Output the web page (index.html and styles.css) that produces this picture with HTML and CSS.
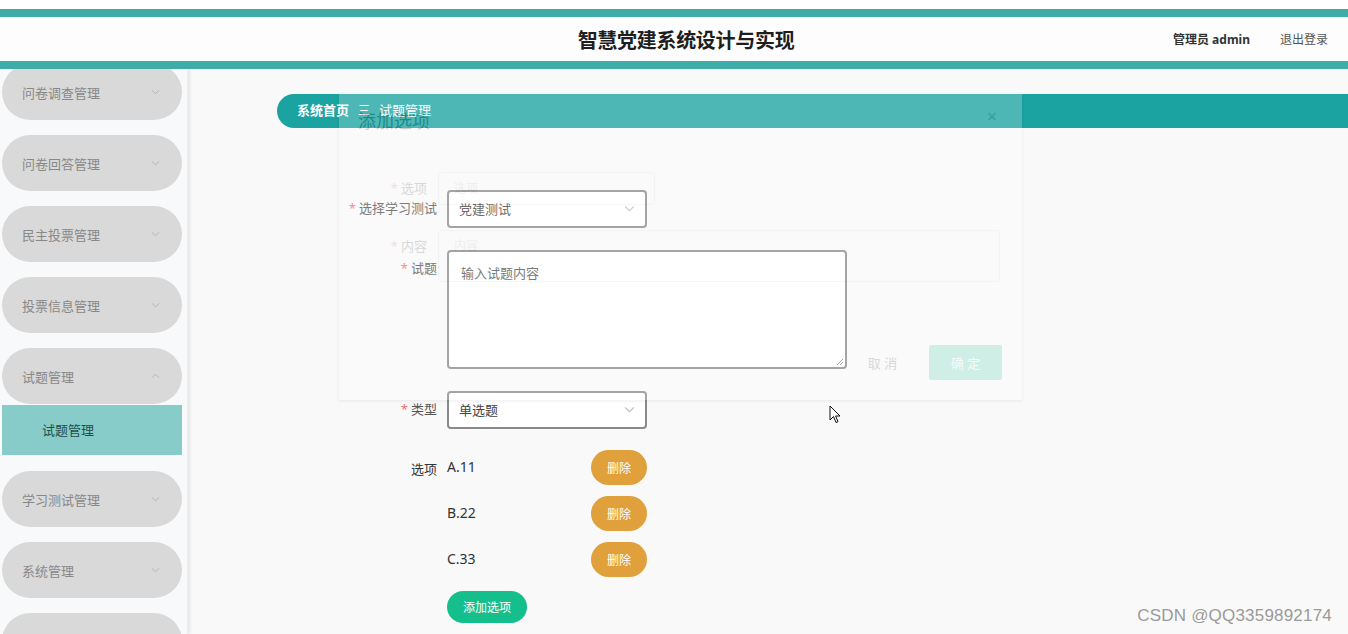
FILE: index.html
```html
<!DOCTYPE html>
<html lang="zh">
<head>
<meta charset="utf-8">
<title>智慧党建系统设计与实现</title>
<link rel="stylesheet" href="styles.css">
</head>
<body>
<div class="topgap"></div>
<header class="header">
  <div class="title">智慧党建系统设计与实现</div>
  <div class="user">
    <span class="admin">管理员 admin</span>
    <span class="logout">退出登录</span>
  </div>
</header>
<div class="layout">
  <aside class="sidebar">
    <ul class="menu">
      <li class="item"><span>问卷调查管理</span><svg class="chev" viewBox="0 0 10 6"><polyline points="1,1 5,5 9,1"/></svg></li>
      <li class="item"><span>问卷回答管理</span><svg class="chev" viewBox="0 0 10 6"><polyline points="1,1 5,5 9,1"/></svg></li>
      <li class="item"><span>民主投票管理</span><svg class="chev" viewBox="0 0 10 6"><polyline points="1,1 5,5 9,1"/></svg></li>
      <li class="item"><span>投票信息管理</span><svg class="chev" viewBox="0 0 10 6"><polyline points="1,1 5,5 9,1"/></svg></li>
      <li class="item open"><span>试题管理</span><svg class="chev" viewBox="0 0 10 6"><polyline points="1,5 5,1 9,5"/></svg></li>
      <li class="sub">试题管理</li>
      <li class="item"><span>学习测试管理</span><svg class="chev" viewBox="0 0 10 6"><polyline points="1,1 5,5 9,1"/></svg></li>
      <li class="item"><span>系统管理</span><svg class="chev" viewBox="0 0 10 6"><polyline points="1,1 5,5 9,1"/></svg></li>
      <li class="item"><span></span></li>
    </ul>
  </aside>
  <main class="main">
    <div class="crumb"><b>系统首页</b><span class="sep">三</span><span>试题管理</span></div>
    <form class="form">
      <div class="row">
        <label class="lbl"><i>*</i>选择学习测试</label>
        <div class="select"><span>党建测试</span><svg class="chev big" viewBox="0 0 10 6"><polyline points="1,1 5,5 9,1"/></svg></div>
      </div>
      <div class="row">
        <label class="lbl"><i>*</i>试题</label>
        <div class="textarea"><span>输入试题内容</span><svg class="grip" viewBox="0 0 8 8"><line x1="1" y1="7" x2="7" y2="1"/><line x1="4" y1="7" x2="7" y2="4"/></svg></div>
      </div>
      <div class="row">
        <label class="lbl"><i>*</i>类型</label>
        <div class="select"><span>单选题</span><svg class="chev big" viewBox="0 0 10 6"><polyline points="1,1 5,5 9,1"/></svg></div>
      </div>
      <div class="row opts-row">
        <label class="lbl">选项</label>
        <div class="opts">
          <div class="opt"><span class="opt-txt">A.11</span><span class="btn del">删除</span></div>
          <div class="opt"><span class="opt-txt">B.22</span><span class="btn del">删除</span></div>
          <div class="opt"><span class="opt-txt">C.33</span><span class="btn del">删除</span></div>
          <span class="btn add">添加选项</span>
        </div>
      </div>
    </form>
  </main>
</div>

<div class="dialog">
  <div class="dlg-head"><span class="dlg-title">添加选项</span><span class="dlg-close">×</span></div>
  <div class="dlg-body">
    <div class="dlg-row"><span class="dlg-lbl"><i>*</i>选项</span><span class="dlg-input">选项</span></div>
    <div class="dlg-row"><span class="dlg-lbl"><i>*</i>内容</span><span class="dlg-text">内容</span></div>
  </div>
  <div class="dlg-foot"><span class="dlg-cancel">取 消</span><span class="dlg-ok">确 定</span></div>
</div>

<svg class="cursor" viewBox="0 0 12 19"><path d="M1 1 L1 15 L4.5 11.5 L7 17.5 L9 16.6 L6.6 11 L11 11 Z"/></svg>
<div class="watermark">CSDN @QQ3359892174</div>
</body>
</html>
```
FILE: styles.css
```css
* { box-sizing: border-box; }
html, body { margin: 0; padding: 0; }
body {
  width: 1348px;
  height: 634px;
  overflow: hidden;
  background: #f9f9f9;
  font-family: "Noto Sans", "Noto Sans CJK SC", sans-serif;
  color: #333;
  position: relative;
}
.topgap { height: 9px; background: #ffffff; }
.header {
  height: 60px;
  border-top: 8px solid #3eadaa;
  border-bottom: 8px solid #3eadaa;
  background: #fdfdfd;
  display: flex;
  align-items: center;
  justify-content: center;
  padding-left: 24px;
  position: relative;
}
.title {
  font-size: 20px;
  font-weight: 700;
  color: #1e1e1e;
  letter-spacing: -0.3px;
}
.user {
  position: absolute;
  right: 20px;
  top: 0;
  height: 44px;
  display: flex;
  align-items: center;
  gap: 30px;
  font-size: 12px;
}
.admin { font-weight: 700; color: #333; }
.logout { color: #555; }

.layout { display: flex; height: 565px; overflow: hidden; }
.sidebar {
  width: 188px;
  flex: none;
  background: #f8f9fa;
  box-shadow: 2px 0 3px rgba(0,0,0,0.08);
  border-right: 1px solid #ececec;
  overflow: hidden;
}
.menu { list-style: none; margin: -5px 0 0 0; padding: 0; }
.item {
  margin: 0 0 15px 2px;
  width: 180px;
  height: 56px;
  border-radius: 28px;
  background: #d9d9d9;
  display: flex;
  align-items: center;
  justify-content: space-between;
  padding: 0 22px 0 20px;
  font-size: 13px;
  color: #888;
}
.item.open { margin-bottom: 1px; }
.chev { width: 9px; height: 6px; fill: none; stroke: #b0b0b0; stroke-width: 1; }
.chev.big { width: 11px; height: 7px; stroke: #bbb; }
.sub {
  margin: 0 0 16px 2px;
  width: 180px;
  height: 50px;
  background: #87ccc8;
  padding-left: 40px;
  line-height: 50px;
  font-size: 13px;
  color: #1f4f4d;
}

.main { flex: 1; padding: 25px 0 0 89px; }
.crumb {
  height: 34px;
  background: #1aa3a0;
  border-radius: 17px 0 0 17px;
  padding: 0 0 3px 20px;
  display: flex;
  align-items: center;
  font-size: 13px;
  color: #fff;
}
.crumb b { font-weight: 700; }
.crumb .sep { margin: 0 9px 0 9px; font-size: 12px; }

.form { margin-top: 62px; }
.row { display: flex; margin-bottom: 22px; }
.lbl {
  width: 170px;
  padding-right: 10px;
  text-align: right;
  line-height: 37px;
  font-size: 13px;
  color: #555;
}
.lbl i { font-style: normal; color: #f56c6c; margin-right: 3px; }
.select {
  width: 200px;
  height: 38px;
  border: 2px solid #8a8a8a;
  border-radius: 4px;
  background: #fff;
  display: flex;
  align-items: center;
  justify-content: space-between;
  padding: 0 10px 2px 10px;
  font-size: 13px;
  color: #444;
}
.textarea {
  width: 400px;
  height: 119px;
  border: 2px solid #8a8a8a;
  border-radius: 4px;
  background: #fff;
  padding: 11px 12px;
  font-size: 13px;
  color: #555;
  position: relative;
}
.grip { position: absolute; right: 1px; bottom: 1px; width: 8px; height: 8px; stroke: #888; stroke-width: 1; }
.opts-row { margin-top: -1px; }
.opts-row .lbl { line-height: 1; padding-top: 13px; color: #333; }
.opts { display: flex; flex-direction: column; align-items: flex-start; }
.opt { display: flex; align-items: center; height: 35px; margin-bottom: 11px; }
.opt-txt { width: 144px; font-size: 14px; color: #333; padding-bottom: 2px; }
.btn {
  display: inline-flex;
  align-items: center;
  justify-content: center;
  color: #fff;
  font-size: 12px;
}
.del { width: 56px; height: 35px; border-radius: 18px; background: #e0a03c; }
.add { width: 80px; height: 32px; border-radius: 16px; background: #15bf8c; margin-top: 3px; }

.dialog {
  position: absolute;
  left: 339px;
  top: 94px;
  width: 683px;
  height: 306px;
  background: #fff;
  opacity: 0.22;
  box-shadow: 0 1px 3px rgba(0,0,0,0.3);
}
.dlg-head {
  display: flex;
  justify-content: space-between;
  padding: 13px 25px 0 19px;
  height: 78px;
}
.dlg-title { font-size: 18px; color: #303133; }
.dlg-close { font-size: 18px; color: #909399; line-height: 18px; }
.dlg-body { padding: 0; }
.dlg-row { display: flex; margin-bottom: 25px; }
.dlg-lbl {
  width: 89px;
  text-align: right;
  padding-right: 1px;
  font-size: 13px;
  color: #606266;
  line-height: 33px;
}
.dlg-lbl i { font-style: normal; color: #f56c6c; margin-right: 3px; }
.dlg-input {
  margin-left: 10px;
  width: 217px;
  height: 33px;
  border: 1px solid #dcdfe6;
  border-radius: 4px;
  padding: 0 15px;
  line-height: 31px;
  font-size: 12px;
  color: #c0c4cc;
}
.dlg-text {
  margin-left: 10px;
  width: 562px;
  height: 52px;
  border: 1px solid #dcdfe6;
  border-radius: 4px;
  padding: 5px 15px;
  font-size: 12px;
  color: #c0c4cc;
}
.dlg-foot {
  display: flex;
  justify-content: flex-end;
  gap: 13px;
  padding: 38px 20px 0 0;
}
.dlg-cancel, .dlg-ok {
  height: 35px;
  display: inline-flex;
  align-items: center;
  justify-content: center;
  font-size: 13px;
  border-radius: 2px;
}
.dlg-cancel { width: 67px; color: #606266; }
.dlg-ok { width: 73px; background: #38c9a6; color: #fff; }

.cursor {
  position: absolute;
  left: 829px;
  top: 405px;
  width: 12px;
  height: 19px;
  fill: #fff;
  stroke: #111;
  stroke-width: 1;
}
.watermark {
  position: absolute;
  right: 16px;
  bottom: 8px;
  font-family: "Liberation Sans", sans-serif;
  font-size: 17px;
  color: #9a9a9a;
  letter-spacing: 0.2px;
}
```
